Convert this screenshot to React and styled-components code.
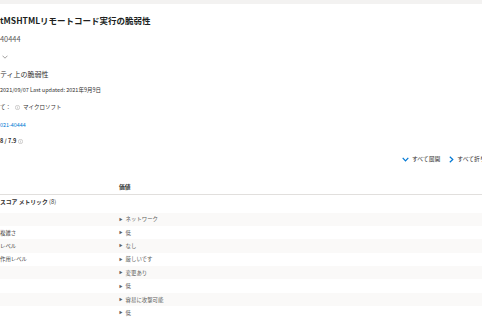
import React from "react";
import styled, { createGlobalStyle } from "styled-components";

const Global = createGlobalStyle`
  html, body {
    margin: 0;
    padding: 0;
    background: #ffffff;
    overflow: hidden;
  }
  body {
    font-family: "Noto Sans CJK JP", "Noto Sans", sans-serif;
    color: #323130;
  }
`;

const metrics = [
  { label: "", value: "ネットワーク" },
  { label: "複雑さ", value: "低" },
  { label: "レベル", value: "なし" },
  { label: "作用レベル", value: "厳しいです" },
  { label: "", value: "変更あり" },
  { label: "", value: "低" },
  { label: "", value: "容易に攻撃可能" },
  { label: "", value: "低" },
];

const Info = () => (
  <InfoIcon viewBox="0 0 10 10">
    <circle cx="5" cy="5" r="4.3" fill="none" stroke="currentColor" strokeWidth="0.8" />
    <rect x="4.6" y="4.2" width="0.8" height="3" fill="currentColor" />
    <circle cx="5" cy="2.9" r="0.5" fill="currentColor" />
  </InfoIcon>
);

const App = () => {
  return (
    <>
      <Global />
      <Page>
        <TopBand />
        <Title>tMSHTMLリモートコード実行の脆弱性</Title>
        <CveId>40444</CveId>
        <Toggle>
          <svg width="6" height="4" viewBox="0 0 6 4">
            <path d="M0.5 0.7 L3 3.2 L5.5 0.7" fill="none" stroke="#8a8886" strokeWidth="0.8" />
          </svg>
        </Toggle>
        <Subtitle>ティ上の脆弱性</Subtitle>
        <Meta $mt={7}>2021/09/07 Last updated: 2021年9月9日</Meta>
        <Meta $mt={9}>
          て：<Info /> マイクロソフト
        </Meta>
        <LinkLine>021-40444</LinkLine>
        <Score>
          8 / 7.9 <Info />
        </Score>
        <Toolbar>
          <ToolButton>
            <svg width="7" height="5" viewBox="0 0 7 5">
              <path d="M0.7 0.8 L3.5 3.8 L6.3 0.8" fill="none" stroke="#0078d4" strokeWidth="1.2" />
            </svg>
            すべて展開
          </ToolButton>
          <ToolButton>
            <svg width="5" height="7" viewBox="0 0 5 7">
              <path d="M0.8 0.7 L3.8 3.5 L0.8 6.3" fill="none" stroke="#0078d4" strokeWidth="1.2" />
            </svg>
            すべて折りたたむ
          </ToolButton>
        </Toolbar>
        <Table>
          <HeadRow>
            <Cell />
            <HeadCell>価値</HeadCell>
          </HeadRow>
          <GroupRow>
            スコア メトリック <span>(8)</span>
          </GroupRow>
          {metrics.map((m, i) => (
            <Row key={i} $alt={i % 2 === 0}>
              <Cell>{m.label}</Cell>
              <ValueCell>
                <Arrow>▶</Arrow>
                {m.value}
              </ValueCell>
            </Row>
          ))}
        </Table>
      </Page>
    </>
  );
};

const Page = styled.div`
  width: 503px;
  display: flex;
  flex-direction: column;
`;

const TopBand = styled.div`
  height: 4px;
  background: #f3f2f1;
`;

const Title = styled.h1`
  margin: 9px 0 0;
  height: 14px;
  line-height: 14px;
  font-size: 8.5px;
  font-weight: 700;
  color: #201f1e;
  white-space: nowrap;
`;

const CveId = styled.div`
  margin-top: 7px;
  height: 10px;
  line-height: 10px;
  font-size: 7.4px;
  color: #605e5c;
`;

const Toggle = styled.div`
  margin-top: 8px;
  height: 10px;
  padding-left: 2px;
  display: flex;
  align-items: center;
`;

const Subtitle = styled.div`
  margin-top: 7px;
  height: 10px;
  line-height: 10px;
  font-size: 7px;
  color: #323130;
`;

const Meta = styled.div`
  margin-top: ${(p) => p.$mt}px;
  height: 8px;
  line-height: 8px;
  font-size: 5.5px;
  color: #323130;
  display: flex;
  align-items: center;
  gap: 1.5px;
  white-space: nowrap;
`;

const InfoIcon = styled.svg`
  width: 5px;
  height: 5px;
  color: #8a8886;
  margin: 0 2px;
`;

const LinkLine = styled.div`
  margin-top: 10px;
  height: 8px;
  line-height: 8px;
  font-size: 5.4px;
  color: #0078d4;
`;

const Score = styled.div`
  margin-top: 8px;
  height: 8px;
  line-height: 8px;
  font-size: 5.6px;
  font-weight: 700;
  color: #323130;
  display: flex;
  align-items: center;
`;

const Toolbar = styled.div`
  margin-top: 10px;
  height: 8px;
  display: flex;
  justify-content: flex-end;
  gap: 9px;
`;

const ToolButton = styled.div`
  display: flex;
  align-items: center;
  gap: 3px;
  font-size: 5.8px;
  line-height: 8px;
  color: #323130;
  white-space: nowrap;
`;

const Table = styled.div`
  margin-top: 15px;
  display: flex;
  flex-direction: column;
`;

const HeadRow = styled.div`
  display: grid;
  grid-template-columns: 118px 1fr;
  height: 16px;
  align-items: center;
  border-bottom: 1px solid #e1dfdd;
`;

const Cell = styled.div`
  font-size: 5.4px;
  color: #484644;
  white-space: nowrap;
`;

const HeadCell = styled.div`
  padding-left: 1px;
  font-size: 5.8px;
  font-weight: 700;
  color: #323130;
`;

const GroupRow = styled.div`
  height: 17.5px;
  line-height: 14px;
  font-size: 5.8px;
  font-weight: 700;
  color: #323130;
  span {
    font-weight: 400;
  }
`;

const Row = styled.div`
  display: grid;
  grid-template-columns: 118px 1fr;
  align-items: center;
  height: 13.4px;
  background: ${(p) => (p.$alt ? "#faf9f8" : "#ffffff")};
`;

const ValueCell = styled.div`
  display: flex;
  align-items: center;
  font-size: 5.4px;
  color: #605e5c;
  white-space: nowrap;
`;

const Arrow = styled.span`
  font-size: 3.6px;
  color: #605e5c;
  margin: 0 3px 0 1px;
`;

export default App;
